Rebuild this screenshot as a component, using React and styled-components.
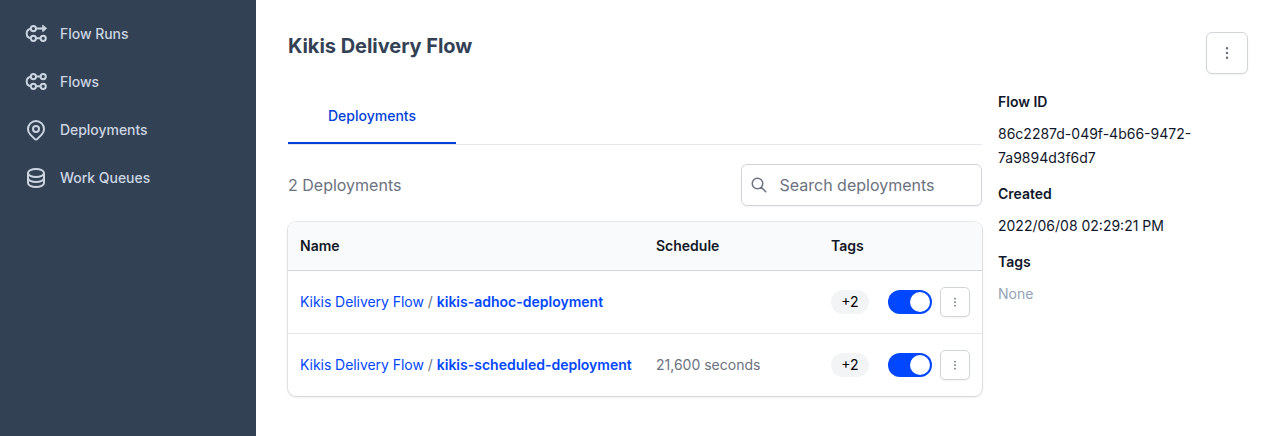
import React from "react";
import styled, { createGlobalStyle } from "styled-components";

const GlobalStyle = createGlobalStyle`
  *, *::before, *::after { box-sizing: border-box; }
  body {
    margin: 0;
    background: #fff;
    color: #0f172a;
    font-family: Inter, "Liberation Sans", sans-serif;
    font-size: 14px;
    line-height: 24px;
  }
  button, input { font: inherit; }
`;

const Page = styled.div`
  display: flex;
  height: 436px;
  overflow: hidden;
`;

const Sidebar = styled.nav`
  flex: 0 0 256px;
  padding-top: 10px;
  background: #334155;
`;

const NavItem = styled.a`
  display: flex;
  align-items: center;
  gap: 12px;
  height: 48px;
  padding: 0 24px;
  color: #cbd5e1;
  font-weight: 500;
  letter-spacing: -0.04px;
`;

const Icon = styled.svg`
  display: block;
  flex: none;
  width: ${(p) => p.$size}px;
  height: ${(p) => p.$size}px;
  fill: none;
  stroke: currentColor;
  stroke-width: ${(p) => p.$stroke || 2};
  stroke-linecap: round;
  stroke-linejoin: round;
`;

const Main = styled.main`
  flex: 1;
  min-width: 0;
  padding: 32px;
`;

const Header = styled.header`
  display: flex;
  justify-content: space-between;
  height: 56px;
`;

const Title = styled.h1`
  margin: 0;
  color: #334155;
  font-size: 20px;
  font-weight: 700;
  line-height: 28px;
  letter-spacing: -0.04px;
`;

const IconButton = styled.button`
  display: flex;
  align-items: center;
  justify-content: center;
  flex: none;
  width: ${(p) => p.$size}px;
  height: ${(p) => p.$size}px;
  padding: 0;
  border: 1px solid #d1d5db;
  border-radius: ${(p) => (p.$size > 40 ? 6 : 5)}px;
  background: #fff;
  color: #6b7280;
  box-shadow: 0 1px 2px rgba(0, 0, 0, 0.05);
`;

const Columns = styled.div`
  display: grid;
  grid-template-columns: 694px 250px;
  gap: 16px;
`;

const TabList = styled.div`
  display: flex;
  height: 57px;
  border-bottom: 1px solid #e5e7eb;
`;

const Tab = styled.div`
  height: 56px;
  padding: 16px 40px 0;
  border-bottom: 2px solid #0041d9;
  color: #0041d9;
  font-weight: 500;
`;

const Toolbar = styled.div`
  display: flex;
  align-items: center;
  justify-content: space-between;
  margin: 19px 0 16px;
`;

const Count = styled.span`
  color: #6b7280;
  font-size: 16px;
`;

const SearchBox = styled.label`
  display: flex;
  align-items: center;
  gap: 11.5px;
  width: 241px;
  height: 42px;
  padding: 0 8px;
  border: 1px solid #d1d5db;
  border-radius: 6px;
  color: #6b7280;
  box-shadow: 0 1px 2px rgba(0, 0, 0, 0.05);
`;

const SearchInput = styled.input`
  flex: 1;
  min-width: 0;
  padding: 0;
  border: 0;
  outline: 0;
  background: transparent;
  font-size: 16px;
  &::placeholder { color: #6b7280; opacity: 1; }
`;

const Table = styled.div`
  overflow: hidden;
  border-radius: 8px;
  box-shadow: 0 0 0 1px rgba(0, 0, 0, 0.08), 0 1px 3px rgba(0, 0, 0, 0.12);
`;

const Row = styled.div`
  display: grid;
  grid-template-columns: 356px 175px 57px 1fr;
  align-items: center;
  height: 62px;
  padding: 0 12px;
  color: #6b7280;
  & + & {
    height: 63px;
    border-top: 1px solid #e5e7eb;
  }
`;

const HeadRow = styled.div`
  display: grid;
  grid-template-columns: 356px 175px 1fr;
  align-items: center;
  height: 49px;
  padding: 0 12px;
  border-bottom: 1px solid #d1d5db;
  background: #f9fafb;
  color: #111827;
  font-weight: 600;
`;

const FlowLink = styled.a`
  color: #0047ff;
  font-weight: ${(p) => (p.$strong ? 600 : 400)};
  letter-spacing: ${(p) => (p.$strong ? 0 : -0.05)}px;
`;

const TagPill = styled.span`
  display: flex;
  align-items: center;
  justify-content: center;
  width: 38px;
  height: 24px;
  border-radius: 12px;
  background: #f3f4f6;
  color: #000;
`;

const Actions = styled.div`
  display: flex;
  align-items: center;
  gap: 8px;
`;

const Toggle = styled.span`
  display: flex;
  justify-content: flex-end;
  width: 44px;
  height: 24px;
  padding: 2px;
  border-radius: 12px;
  background: #0047ff;
`;

const Knob = styled.span`
  width: 20px;
  height: 20px;
  border-radius: 50%;
  background: #fff;
`;

const Details = styled.dl`
  margin: 0;
  padding-top: 2px;
`;

const Term = styled.dt`
  font-weight: 600;
`;

const Value = styled.dd`
  margin: 8px 0 12px;
  color: ${(p) => (p.$muted ? "#94a3b8" : "#0f172a")};
`;

const FlowLines = ({ run }) => (
  <Icon viewBox="0 0 24 24" $size={24} $stroke={2}>
    <circle cx="9.4" cy="6.6" r="2.6" />
    <circle cx="9.4" cy="16.3" r="2.6" />
    <circle cx="19.2" cy="16.3" r="2.6" />
    <path d="M6.8 6.7a4.8 4.8 0 0 0 0 9.5M12 16.3h4.6M12 6.6h4.6" strokeLinecap="butt" />
    {run ? (
      <>
        <path d="M16.4 6.6h3" />
        <path d="M18.7 3.5v6.2l3.7-3.1z" fill="currentColor" strokeWidth="0.9" />
      </>
    ) : (
      <circle cx="19.2" cy="6.6" r="2.6" />
    )}
  </Icon>
);

const PinIcon = () => (
  <Icon viewBox="0 0 24 24" $size={24}>
    <path d="M17.657 16.657L13.414 20.9a1.998 1.998 0 01-2.827 0l-4.244-4.243a8 8 0 1111.314 0z" />
    <path d="M15 11a3 3 0 11-6 0 3 3 0 016 0z" />
  </Icon>
);

const DatabaseIcon = () => (
  <Icon viewBox="0 0 24 24" $size={24}>
    <path d="M4 7v10c0 2.21 3.582 4 8 4s8-1.79 8-4V7M4 7c0 2.21 3.582 4 8 4s8-1.79 8-4M4 7c0-2.21 3.582-4 8-4s8 1.79 8 4m0 5c0 2.21-3.582 4-8 4s-8-1.79-8-4" />
  </Icon>
);

const SearchIcon = () => (
  <Icon viewBox="0 0 24 24" $size={18}>
    <path d="M21 21l-6-6m2-5a7 7 0 11-14 0 7 7 0 0114 0z" />
  </Icon>
);

const DotsIcon = ({ size }) => (
  <Icon viewBox="0 0 24 24" $size={size} $stroke={size < 16 ? 1.4 : 1.8}>
    <path d="M12 5v.01M12 12v.01M12 19v.01M12 6a1 1 0 110-2 1 1 0 010 2zm0 7a1 1 0 110-2 1 1 0 010 2zm0 7a1 1 0 110-2 1 1 0 010 2z" />
  </Icon>
);

const deployments = [
  { name: "kikis-adhoc-deployment", schedule: "" },
  { name: "kikis-scheduled-deployment", schedule: "21,600 seconds" },
];

export default function App() {
  return (
    <Page>
      <GlobalStyle />
      <Sidebar>
        <NavItem><FlowLines run />Flow Runs</NavItem>
        <NavItem><FlowLines />Flows</NavItem>
        <NavItem><PinIcon />Deployments</NavItem>
        <NavItem><DatabaseIcon />Work Queues</NavItem>
      </Sidebar>
      <Main>
        <Header>
          <Title>Kikis Delivery Flow</Title>
          <IconButton $size={42} aria-label="Flow menu"><DotsIcon size={16} /></IconButton>
        </Header>
        <Columns>
          <section>
            <TabList><Tab>Deployments</Tab></TabList>
            <Toolbar>
              <Count>2 Deployments</Count>
              <SearchBox>
                <SearchIcon />
                <SearchInput placeholder="Search deployments" />
              </SearchBox>
            </Toolbar>
            <Table>
              <HeadRow>
                <span>Name</span>
                <span>Schedule</span>
                <span>Tags</span>
              </HeadRow>
              {deployments.map((d) => (
                <Row key={d.name}>
                  <span>
                    <FlowLink>Kikis Delivery Flow</FlowLink> / <FlowLink $strong>{d.name}</FlowLink>
                  </span>
                  <span>{d.schedule}</span>
                  <TagPill>+2</TagPill>
                  <Actions>
                    <Toggle><Knob /></Toggle>
                    <IconButton $size={30} aria-label="Deployment menu"><DotsIcon size={12} /></IconButton>
                  </Actions>
                </Row>
              ))}
            </Table>
          </section>
          <Details>
            <Term>Flow ID</Term>
            <Value>86c2287d-049f-4b66-9472-<br />7a9894d3f6d7</Value>
            <Term>Created</Term>
            <Value>2022/06/08 02:29:21 PM</Value>
            <Term>Tags</Term>
            <Value $muted>None</Value>
          </Details>
        </Columns>
      </Main>
    </Page>
  );
}
